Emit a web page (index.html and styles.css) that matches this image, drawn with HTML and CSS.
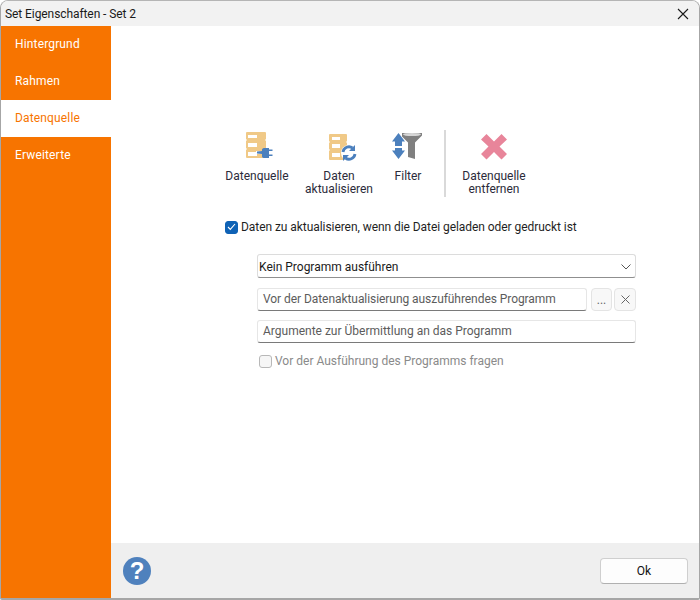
FILE: index.html
```html
<!DOCTYPE html>
<html lang="de">
<head>
<meta charset="utf-8">
<title>Set Eigenschaften - Set 2</title>
<link rel="stylesheet" href="styles.css">
</head>
<body>
<div class="window">
  <header class="titlebar">
    <span class="title">Set Eigenschaften - Set 2</span>
    <svg class="close" width="12" height="12" viewBox="0 0 12 12"><path d="M1 1l10 10M11 1L1 11" stroke="#1a1a1a" stroke-width="1.1" fill="none"/></svg>
  </header>
  <div class="body">
    <nav class="sidebar">
      <div class="nav-item">Hintergrund</div>
      <div class="nav-item">Rahmen</div>
      <div class="nav-item active">Datenquelle</div>
      <div class="nav-item">Erweiterte</div>
    </nav>
    <div class="main">
      <div class="content">
        <div class="toolbar">
          <div class="tool tool-a">
            <svg class="icon" width="32" height="30" viewBox="0 2 32 30">
              <path d="M6 4h18a1 1 0 0 1 1 1v6l-1 1 1 1v7l-1 1 1 1v7a1 1 0 0 1-1 1H6a1 1 0 0 1-1-1v-7l1-1-1-1v-7l1-1-1-1V5a1 1 0 0 1 1-1z" fill="#f0c987"/>
              <path d="M7 7h9v3H7zM7 15h9v4H7zM7 24h9v4H7z" fill="#fff"/>
              <path d="M15 23h7v3h-7z" fill="#fff"/>
              <path d="M16 23.500l5-.5v-1.500a2 2 0 0 1 2-1.500h5v10h-5a2 2 0 0 1-2-1.500V26l-5-.5z" fill="#4c80bd"/>
              <path d="M28 21.500h3.500v1.600H28zM28 26.500h3.500v1.600H28z" fill="#4c80bd"/>
            </svg>
            <div class="label">Datenquelle</div>
          </div>
          <div class="tool tool-b">
            <svg class="icon" width="32" height="30" viewBox="0 2 32 30">
              <path d="M7 6h16a1 1 0 0 1 1 1v6l-1 1 1 1v6l-1 1 1 1v8a1 1 0 0 1-1 1H7a1 1 0 0 1-1-1v-8l1-1-1-1v-6l1-1-1-1V7a1 1 0 0 1 1-1z" fill="#f0c987"/>
              <path d="M9 9h8v3H9zM9 16h8v4H9zM9 25h8v4H9z" fill="#fff"/>
              <circle cx="26" cy="25" r="8" fill="#fff"/>
              <path d="M20 24a6 6 0 0 1 9.500-4" stroke="#4c80bd" stroke-width="2.800" fill="none"/>
              <path d="M32 17v6h-6z" fill="#4c80bd"/>
              <path d="M32 26a6 6 0 0 1-9.500 4" stroke="#4c80bd" stroke-width="2.800" fill="none"/>
              <path d="M20 33v-6h6z" fill="#4c80bd"/>
            </svg>
            <div class="label">Daten<br>aktualisieren</div>
          </div>
          <div class="tool tool-c">
            <svg class="icon" width="32" height="30" viewBox="0 2 32 30">
              <path d="M10 5h20v2.500l-7 7V31l-7-2V14.500l-6-6z" fill="#808080"/>
              <ellipse cx="20" cy="6.500" rx="9" ry="1.600" fill="#d6d6d6"/>
              <path d="M6.500 5l6.500 8.500H10v4.500H3v-4.500H0z" fill="#4c80bd"/>
              <path d="M6.500 31l6.500-8.500H10V20H3v2.500H0z" fill="#4c80bd"/>
            </svg>
            <div class="label">Filter</div>
          </div>
          <div class="separator"></div>
          <div class="tool tool-d">
            <svg class="icon" width="32" height="30" viewBox="0 2 32 30">
              <path d="M8.500 6l7.500 7.500L23.500 6l5.500 5.500-7.500 7 7.500 7.500-5.500 5.500L16 24l-7.500 7.500L3 26l7.500-7.500-7.500-7z" fill="#e8859a"/>
            </svg>
            <div class="label">Datenquelle<br>entfernen</div>
          </div>
        </div>
        <label class="check-row">
          <span class="checkbox checked"><svg width="9" height="8" viewBox="0 0 9 8"><path d="M1 4l2.300 2.400L8 1" stroke="#fff" stroke-width="1.100" fill="none"/></svg></span>
          <span class="tight">Daten zu aktualisieren, wenn die Datei geladen oder gedruckt ist</span>
        </label>
        <div class="form">
          <div class="select">
            <span>Kein Programm ausführen</span>
            <svg width="10" height="6" viewBox="0 0 10 6"><path d="M.5.5L5 5 9.500.5" stroke="#555" fill="none"/></svg>
          </div>
          <div class="file-row">
            <div class="input grow tight">Vor der Datenaktualisierung auszuführendes Programm</div>
            <div class="mini-btn dots">...</div>
            <div class="mini-btn wide"><svg width="9" height="9" viewBox="0 0 9 9"><path d="M.5.5l8 8M8.500.5l-8 8" stroke="#666" fill="none"/></svg></div>
          </div>
          <div class="input">Argumente zur Übermittlung an das Programm</div>
          <label class="check-row sub">
            <span class="checkbox"></span>
            <span>Vor der Ausführung des Programms fragen</span>
          </label>
        </div>
      </div>
      <footer class="footer">
        <svg width="28" height="28" viewBox="0 0 28 28">
          <circle cx="14" cy="14" r="14" fill="#4f81bd"/>
          <text class="help" x="14" y="22" text-anchor="middle">?</text>
        </svg>
        <div class="ok">Ok</div>
      </footer>
    </div>
  </div>
</div>
</body>
</html>
```

FILE: styles.css
```css
html, body {
  margin: 0;
  padding: 0;
  background: #fff;
}
body {
  font-family: Roboto, "Noto Sans", sans-serif;
  font-size: 12px;
  color: #222;
}
.tight { letter-spacing: -0.06px; }
.window {
  box-sizing: border-box;
  width: 700px;
  height: 600px;
  display: flex;
  flex-direction: column;
  border: 1px solid #a6a6a6;
  border-top-color: #b5b5b5;
  border-bottom-width: 2px;
  border-radius: 8px 8px 2px 2px;
  overflow: hidden;
}
.titlebar {
  flex: none;
  height: 25px;
  background: #f2f2f2;
  display: flex;
  align-items: center;
  justify-content: space-between;
  padding: 0 10px 0 4px;
}
.title { color: #1a1a1a; letter-spacing: -0.08px; }
.close { display: block; }
.body {
  flex: 1;
  display: flex;
  min-height: 0;
}
.sidebar {
  flex: none;
  width: 110px;
  background: #f77400;
}
.nav-item {
  height: 37px;
  line-height: 36px;
  padding-left: 14px;
  color: #fff;
  letter-spacing: 0.15px;
}
.nav-item.active {
  background: #fff;
  color: #f77400;
}
.main {
  flex: 1;
  display: flex;
  flex-direction: column;
  min-width: 0;
}
.content {
  flex: 1;
  padding-top: 104px;
  padding-left: 114px;
  background: #fff;
}
.toolbar {
  display: flex;
  align-items: flex-start;
  height: 67px;
}
.tool {
  display: flex;
  flex-direction: column;
  align-items: center;
  text-align: center;
  flex: none;
}
.tool-a { width: 66px; margin-left: -1px; }
.tool-b { width: 80px; margin-left: 9px; }
.tool-c { width: 40px; margin-left: 9px; }
.tool-d { width: 66px; margin-left: 15px; }
.icon { display: block; height: 30px; overflow: visible; }
.label {
  margin-top: 10px;
  line-height: 13px;
  color: #2b2b3a;
  white-space: nowrap;
}
.separator {
  flex: none;
  width: 2px;
  height: 67px;
  margin-left: 16px;
  background: #d9d9d9;
}
.check-row {
  display: flex;
  align-items: center;
  gap: 3px;
  margin-top: 22px;
  height: 16px;
  color: #1f1f1f;
}
.checkbox {
  box-sizing: border-box;
  flex: none;
  width: 13px;
  height: 13px;
  border-radius: 3px;
  border: 1px solid #b8b8b8;
  background: #f6f6f6;
  display: flex;
  align-items: center;
  justify-content: center;
}
.checkbox.checked {
  background: #0f62b5;
  border-color: #0f62b5;
}
.form {
  width: 379px;
  margin-left: 32px;
  margin-top: 19px;
  display: flex;
  flex-direction: column;
}
.select {
  box-sizing: border-box;
  height: 24px;
  display: flex;
  align-items: center;
  justify-content: space-between;
  padding: 1px 4px 0 1px;
  border: 1px solid #dcdcdc;
  border-bottom-color: #8f8f8f;
  border-radius: 3px;
  color: #1a1a1a;
}
.file-row {
  display: flex;
  margin-top: 10px;
}
.input {
  box-sizing: border-box;
  height: 23px;
  line-height: 21px;
  padding-left: 5px;
  border: 1px solid #e6e6e6;
  border-bottom-color: #7a7a7a;
  border-radius: 3px;
  color: #5c5c5c;
  background: #fff;
}
.grow { flex: 1; min-width: 0; }
.mini-btn {
  box-sizing: border-box;
  flex: none;
  width: 21px;
  height: 23px;
  margin-left: 4px;
  border: 1px solid #e4e4e4;
  border-radius: 4px;
  background: #f8f8f8;
  display: flex;
  align-items: center;
  justify-content: center;
  color: #666;
}
.mini-btn.wide { width: 22px; margin-left: 2px; }
.file-row + .input { margin-top: 9px; }
.check-row.sub {
  margin-top: 10px;
  padding-left: 2px;
  color: #8a8a8a;
}
.footer {
  flex: none;
  height: 55px;
  box-sizing: border-box;
  background: #efefef;
  display: flex;
  align-items: center;
  justify-content: space-between;
  padding: 0 11px 0 12px;
}
.help {
  font-family: "Liberation Sans", sans-serif;
  font-size: 24px;
  font-weight: 700;
  fill: #fff;
}
.ok {
  box-sizing: border-box;
  width: 88px;
  height: 26px;
  line-height: 24px;
  text-align: center;
  background: #fdfdfd;
  border: 1px solid #cfcfcf;
  border-bottom-color: #b0b0b0;
  border-radius: 4px;
  color: #111;
}
```
